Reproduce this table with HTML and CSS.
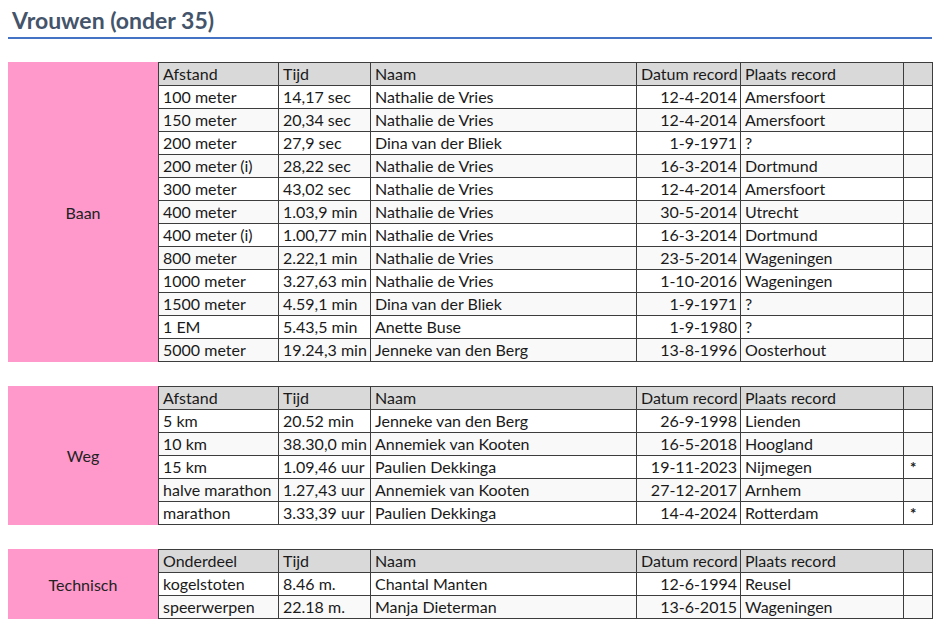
FILE: index.html
```html
<!DOCTYPE html>
<html lang="nl">
<head>
<meta charset="utf-8">
<title>Vrouwen (onder 35)</title>
<link rel="stylesheet" href="styles.css">
</head>
<body>
<h1 class="title">Vrouwen (onder 35)</h1>

<section class="block">
  <div class="label">Baan</div>
  <table class="records">
    <colgroup><col class="c1"><col class="c2"><col class="c3"><col class="c4"><col class="c5"><col class="c6"></colgroup>
    <thead><tr><th>Afstand</th><th>Tijd</th><th>Naam</th><th>Datum record</th><th>Plaats record</th><th></th></tr></thead>
    <tbody>
      <tr><td>100 meter</td><td>14,17 sec</td><td>Nathalie de Vries</td><td class="r">12-4-2014</td><td>Amersfoort</td><td></td></tr>
      <tr><td>150 meter</td><td>20,34 sec</td><td>Nathalie de Vries</td><td class="r">12-4-2014</td><td>Amersfoort</td><td></td></tr>
      <tr><td>200 meter</td><td>27,9 sec</td><td>Dina van der Bliek</td><td class="r">1-9-1971</td><td>?</td><td></td></tr>
      <tr><td>200 meter (i)</td><td>28,22 sec</td><td>Nathalie de Vries</td><td class="r">16-3-2014</td><td>Dortmund</td><td></td></tr>
      <tr><td>300 meter</td><td>43,02 sec</td><td>Nathalie de Vries</td><td class="r">12-4-2014</td><td>Amersfoort</td><td></td></tr>
      <tr><td>400 meter</td><td>1.03,9 min</td><td>Nathalie de Vries</td><td class="r">30-5-2014</td><td>Utrecht</td><td></td></tr>
      <tr><td>400 meter (i)</td><td>1.00,77 min</td><td>Nathalie de Vries</td><td class="r">16-3-2014</td><td>Dortmund</td><td></td></tr>
      <tr><td>800 meter</td><td>2.22,1 min</td><td>Nathalie de Vries</td><td class="r">23-5-2014</td><td>Wageningen</td><td></td></tr>
      <tr><td>1000 meter</td><td>3.27,63 min</td><td>Nathalie de Vries</td><td class="r">1-10-2016</td><td>Wageningen</td><td></td></tr>
      <tr><td>1500 meter</td><td>4.59,1 min</td><td>Dina van der Bliek</td><td class="r">1-9-1971</td><td>?</td><td></td></tr>
      <tr><td>1 EM</td><td>5.43,5 min</td><td>Anette Buse</td><td class="r">1-9-1980</td><td>?</td><td></td></tr>
      <tr><td>5000 meter</td><td>19.24,3 min</td><td>Jenneke van den Berg</td><td class="r">13-8-1996</td><td>Oosterhout</td><td></td></tr>
    </tbody>
  </table>
</section>

<section class="block">
  <div class="label">Weg</div>
  <table class="records">
    <colgroup><col class="c1"><col class="c2"><col class="c3"><col class="c4"><col class="c5"><col class="c6"></colgroup>
    <thead><tr><th>Afstand</th><th>Tijd</th><th>Naam</th><th>Datum record</th><th>Plaats record</th><th></th></tr></thead>
    <tbody>
      <tr><td>5 km</td><td>20.52 min</td><td>Jenneke van den Berg</td><td class="r">26-9-1998</td><td>Lienden</td><td></td></tr>
      <tr><td>10 km</td><td>38.30,0 min</td><td>Annemiek van Kooten</td><td class="r">16-5-2018</td><td>Hoogland</td><td></td></tr>
      <tr><td>15 km</td><td>1.09,46 uur</td><td>Paulien Dekkinga</td><td class="r">19-11-2023</td><td>Nijmegen</td><td class="star">*</td></tr>
      <tr><td>halve marathon</td><td>1.27,43 uur</td><td>Annemiek van Kooten</td><td class="r">27-12-2017</td><td>Arnhem</td><td></td></tr>
      <tr><td>marathon</td><td>3.33,39 uur</td><td>Paulien Dekkinga</td><td class="r">14-4-2024</td><td>Rotterdam</td><td class="star">*</td></tr>
    </tbody>
  </table>
</section>

<section class="block">
  <div class="label">Technisch</div>
  <table class="records">
    <colgroup><col class="c1"><col class="c2"><col class="c3"><col class="c4"><col class="c5"><col class="c6"></colgroup>
    <thead><tr><th>Onderdeel</th><th>Tijd</th><th>Naam</th><th>Datum record</th><th>Plaats record</th><th></th></tr></thead>
    <tbody>
      <tr><td>kogelstoten</td><td>8.46 m.</td><td>Chantal Manten</td><td class="r">12-6-1994</td><td>Reusel</td><td></td></tr>
      <tr><td>speerwerpen</td><td>22.18 m.</td><td>Manja Dieterman</td><td class="r">13-6-2015</td><td>Wageningen</td><td></td></tr>
    </tbody>
  </table>
</section>
</body>
</html>
```

FILE: styles.css
```css
html, body {
  margin: 0;
  padding: 0;
  background: #ffffff;
}
body {
  padding: 0 8px;
  font-family: Lato, "Liberation Sans", sans-serif;
  color: #1a1a1a;
  width: 924px;
}
.title {
  margin: 0;
  padding: 6px 0 3px 4px;
  font-size: 23px;
  line-height: 28px;
  font-weight: 700;
  color: #44546a;
  border-bottom: 2px solid #4472c4;
}
.block {
  display: flex;
  margin-top: 23px;
}
.block + .block {
  margin-top: 24px;
}
.label {
  width: 150px;
  flex: none;
  background: #ff99cc;
  display: flex;
  align-items: center;
  justify-content: center;
  font-size: 16px;
  color: #222;
}
.records {
  border-collapse: collapse;
  table-layout: fixed;
  width: 774px;
  font-size: 16px;
}
.c1 { width: 120px; }
.c2 { width: 92px; }
.c3 { width: 266px; }
.c4 { width: 104px; }
.c5 { width: 163px; }
.c6 { width: 29px; }
.records th,
.records td {
  border: 1px solid #3d3d3d;
  height: 22px;
  padding: 0 3px 0 4px;
  line-height: 22px;
  font-weight: 400;
  text-align: left;
  white-space: nowrap;
  overflow: hidden;
  color: #1a1a1a;
}
.records th {
  background: #d9d9d9;
}
.records tbody tr:nth-child(even) td {
  background: #f9f9f9;
}
.records .r {
  text-align: right;
  padding-right: 3px;
}
.records td.star {
  text-align: left;
  padding-left: 6px;
  font-size: 15px;
  font-weight: 700;
}
```
